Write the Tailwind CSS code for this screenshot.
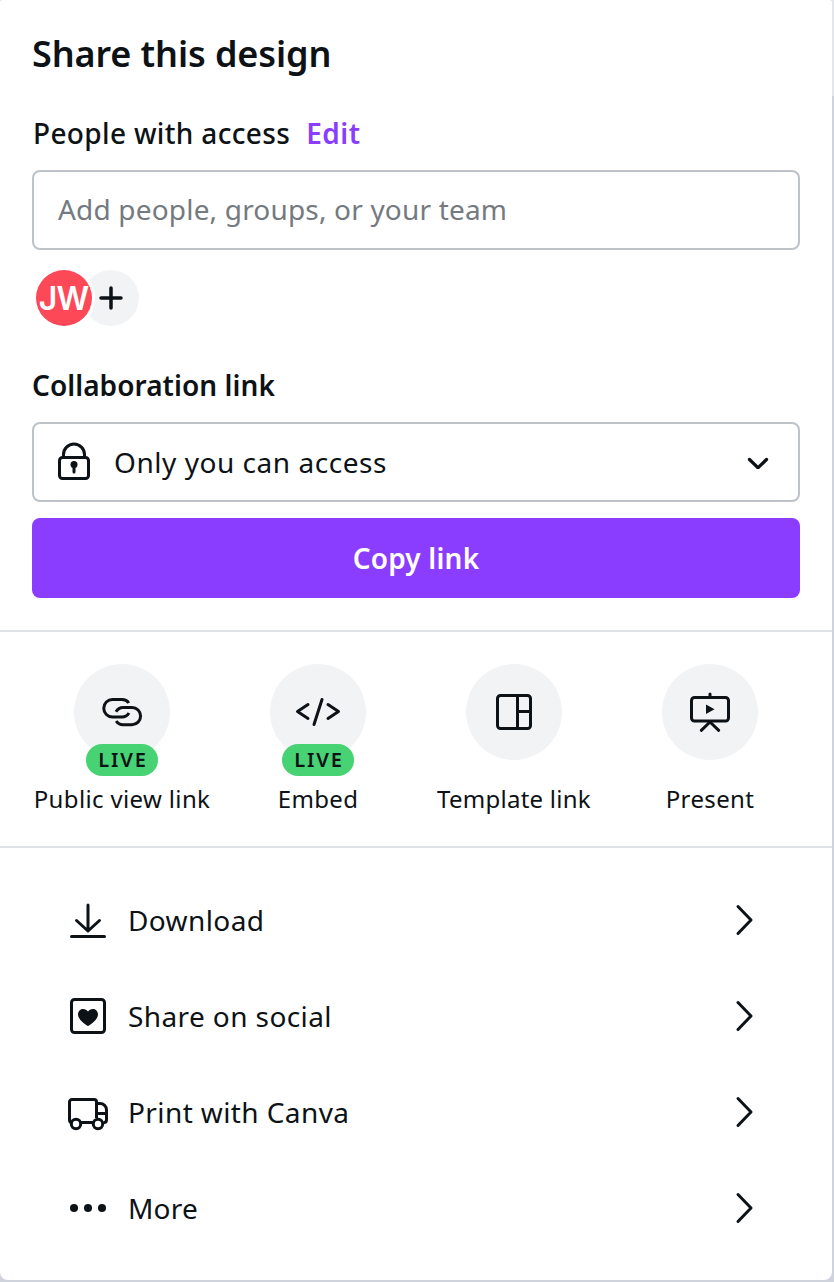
<!DOCTYPE html>
<html lang="en">
<head>
    <meta charset="UTF-8">
    <meta name="viewport" content="width=device-width, initial-scale=1.0">
    <title>Share this design</title>
    <script src="https://cdn.jsdelivr.net/npm/@tailwindcss/browser@4"></script>
</head>
<body class="h-[1282px] w-[834px] overflow-hidden bg-linear-to-b from-[#e3e6ea] from-[96px] to-[#cfd3dc] to-[96px] font-['Noto_Sans',sans-serif] text-[#0d1216]">

    <div class="h-[1280px] w-[832px] rounded-t-[3px] rounded-b-lg bg-white">

        <!-- People and link -->
        <section class="h-[632px] border-b-2 border-[#dfe2e7] px-8 pt-8">
            <h1 class="h-11 text-[36px] leading-[44px] font-semibold tracking-[-0.1px] whitespace-nowrap">Share this design</h1>

            <div class="mt-9 flex h-[42px] gap-[16px] pl-px text-[28px] leading-[42px] font-medium whitespace-nowrap">
                <h2 class="tracking-[0.34px]">People with access</h2>
                <a href="#" class="font-semibold tracking-[0.5px] text-[#8b3dff]">Edit</a>
            </div>

            <input type="text" placeholder="Add people, groups, or your team"
                class="mt-4 block h-20 w-full rounded-lg border-2 border-[#bdc3c9] px-6 pb-0.5 text-[28px] tracking-[0.18px] placeholder:text-[#747a80]">

            <div class="mt-5 flex h-14 pl-1">
                <div class="z-10 flex size-14 items-center justify-center rounded-full bg-[#fc4857] pt-0.5 pr-px font-['Inter',sans-serif] text-[32px] font-semibold tracking-[-0.8px] text-white ring-3 ring-white">JW</div>
                <button class="-ml-[9px] flex size-14 items-center justify-center rounded-full bg-[#f2f3f5]">
                    <svg class="size-6" viewBox="0 0 24 24" fill="none" stroke="currentColor" stroke-width="3.5" stroke-linecap="round">
                        <path d="M12 2v20M2 12h20" />
                    </svg>
                </button>
            </div>

            <h2 class="mt-[38px] h-[42px] text-[28px] leading-[42px] font-semibold tracking-[0.05px]">Collaboration link</h2>

            <button class="mt-4 flex h-20 w-full items-center rounded-lg border-2 border-[#bdc3c9] pr-[26px] pl-4">
                <svg class="size-12" viewBox="0 0 48 48" fill="none" stroke="currentColor" stroke-width="3">
                    <rect x="9.5" y="19.5" width="29" height="21" rx="3" />
                    <path d="M13.5 19v-2.500a10.500 10.500 0 0 1 21 0V19" />
                    <circle cx="24" cy="26.500" r="3.500" fill="currentColor" stroke="none" />
                    <path d="M24 27v7" stroke-linecap="round" />
                </svg>
                <span class="ml-4 text-[28px] tracking-[0.54px]">Only you can access</span>
                <svg class="ml-auto size-7" viewBox="0 0 28 28" fill="none" stroke="currentColor" stroke-width="3.3" stroke-linecap="round" stroke-linejoin="round">
                    <path d="M5.500 11.500l7.600 7.400q.9.800 1.800 0L22.500 11.500" />
                </svg>
            </button>

            <button class="mt-4 h-20 w-full rounded-lg bg-[#8b3dff] text-[28px] font-semibold tracking-[0.2px] text-white">Copy link</button>
        </section>

        <!-- Quick actions -->
        <section class="grid h-[216px] grid-cols-4 border-b-2 border-[#dfe2e7] px-6 pt-8 text-[24px] tracking-[0.36px] whitespace-nowrap">
            <div class="flex flex-col items-center">
                <div class="relative flex size-24 items-center justify-center rounded-full bg-[#f2f3f5]">
                    <svg class="size-12" viewBox="0 0 48 48" fill="none" stroke="currentColor" stroke-width="3">
                        <path d="M30.800 15Q28.500 11.500 24 11.500H14.500a8.600 8.600 0 0 0 0 17.500H24q4.500 0 7-4" />
                        <path d="M18.200 33Q20.500 36.700 25 36.700h9a8.600 8.600 0 0 0 0-17.200h-9q-4.500 0-7 4.300" />
                    </svg>
                    <span class="absolute top-20 left-3 h-8 w-[72px] rounded-full bg-[#47d274] pl-0.5 text-center text-[20px] leading-8 font-semibold tracking-[1.8px]">LIVE</span>
                </div>
                <span class="mt-[21px] leading-9">Public view link</span>
            </div>
            <div class="flex flex-col items-center">
                <div class="relative flex size-24 items-center justify-center rounded-full bg-[#f2f3f5]">
                    <svg class="size-12" viewBox="0 0 48 48" fill="none" stroke="currentColor" stroke-width="3" stroke-linecap="round" stroke-linejoin="round">
                        <path d="M14 16.500L3.500 23.500l10.500 7M34 16.500l10.500 7-10.500 7M28 11.500l-8 25" />
                    </svg>
                    <span class="absolute top-20 left-3 h-8 w-[72px] rounded-full bg-[#47d274] pl-0.5 text-center text-[20px] leading-8 font-semibold tracking-[1.8px]">LIVE</span>
                </div>
                <span class="mt-[21px] leading-9">Embed</span>
            </div>
            <div class="flex flex-col items-center">
                <div class="flex size-24 items-center justify-center rounded-full bg-[#f2f3f5]">
                    <svg class="size-12" viewBox="0 0 48 48" fill="none" stroke="currentColor" stroke-width="3">
                        <rect x="7.500" y="7.500" width="33" height="33" rx="3" />
                        <path d="M27.500 7.500v33M27.500 23.500h13" />
                    </svg>
                </div>
                <span class="mt-[21px] leading-9 tracking-[0.25px]">Template link</span>
            </div>
            <div class="flex flex-col items-center">
                <div class="flex size-24 items-center justify-center rounded-full bg-[#f2f3f5]">
                    <svg class="size-12" viewBox="0 0 48 48" fill="none" stroke="currentColor" stroke-width="3" stroke-linecap="round">
                        <rect x="5.500" y="9.500" width="37" height="23.500" rx="3" />
                        <path d="M24 6v3M24 34l-8.700 8.300M24 34l8.700 8.300" />
                        <path d="M20 16.500v9.500l8.500-4.700z" fill="currentColor" stroke="none" />
                    </svg>
                </div>
                <span class="mt-[21px] leading-9">Present</span>
            </div>
        </section>

        <!-- Menu -->
        <ul class="px-16 pt-6 text-[28px] tracking-[0.4px]">
            <li class="flex h-24 items-center">
                <svg class="size-12" viewBox="0 0 48 48" fill="none" stroke="currentColor" stroke-width="3" stroke-linecap="round" stroke-linejoin="round">
                    <path d="M24 9v26M12.500 24.500L24 35l11.500-10.500M7.500 40.500h33" />
                </svg>
                <span class="ml-4">Download</span>
                <svg class="ml-auto size-12" viewBox="0 0 48 48" fill="none" stroke="currentColor" stroke-width="3" stroke-linecap="round" stroke-linejoin="round">
                    <path d="M18 10.500L31 24l-13 13.500" />
                </svg>
            </li>
            <li class="flex h-24 items-center">
                <svg class="size-12" viewBox="0 0 48 48" fill="none" stroke="currentColor" stroke-width="3">
                    <rect x="7.500" y="7.500" width="33" height="33" rx="3" />
                    <path d="M24 34c-1-.2-10-6-10-11.500 0-6 7-7.500 10-3 3-4.500 10-3 10 3C34 28 25 33.800 24 34z" fill="currentColor" stroke="none" />
                </svg>
                <span class="ml-4">Share on social</span>
                <svg class="ml-auto size-12" viewBox="0 0 48 48" fill="none" stroke="currentColor" stroke-width="3" stroke-linecap="round" stroke-linejoin="round">
                    <path d="M18 10.500L31 24l-13 13.500" />
                </svg>
            </li>
            <li class="flex h-24 items-center">
                <svg class="size-12" viewBox="0 0 48 48" fill="none" stroke="currentColor" stroke-width="3">
                    <path d="M8.500 34.500H8a2.500 2.500 0 0 1-2.500-2.500V14A2.500 2.500 0 0 1 8 11.500h22a2.500 2.500 0 0 1 2.500 2.500v16M17 34.500h12.500" />
                    <path d="M32.500 15.500H36a6.500 6.500 0 0 1 6.500 6.500v10a2.500 2.500 0 0 1-2.500 2.500M32.500 25.500h10" />
                    <circle cx="12" cy="36" r="4.700" />
                    <circle cx="34" cy="36" r="4.700" />
                </svg>
                <span class="ml-4">Print with Canva</span>
                <svg class="ml-auto size-12" viewBox="0 0 48 48" fill="none" stroke="currentColor" stroke-width="3" stroke-linecap="round" stroke-linejoin="round">
                    <path d="M18 10.500L31 24l-13 13.500" />
                </svg>
            </li>
            <li class="flex h-24 items-center">
                <svg class="size-12" viewBox="0 0 48 48" fill="currentColor">
                    <circle cx="10" cy="24" r="4" />
                    <circle cx="24" cy="24" r="4" />
                    <circle cx="38" cy="24" r="4" />
                </svg>
                <span class="ml-4 tracking-[0.2px]">More</span>
                <svg class="ml-auto size-12" viewBox="0 0 48 48" fill="none" stroke="currentColor" stroke-width="3" stroke-linecap="round" stroke-linejoin="round">
                    <path d="M18 10.500L31 24l-13 13.500" />
                </svg>
            </li>
        </ul>
    </div>

</body>
</html>
